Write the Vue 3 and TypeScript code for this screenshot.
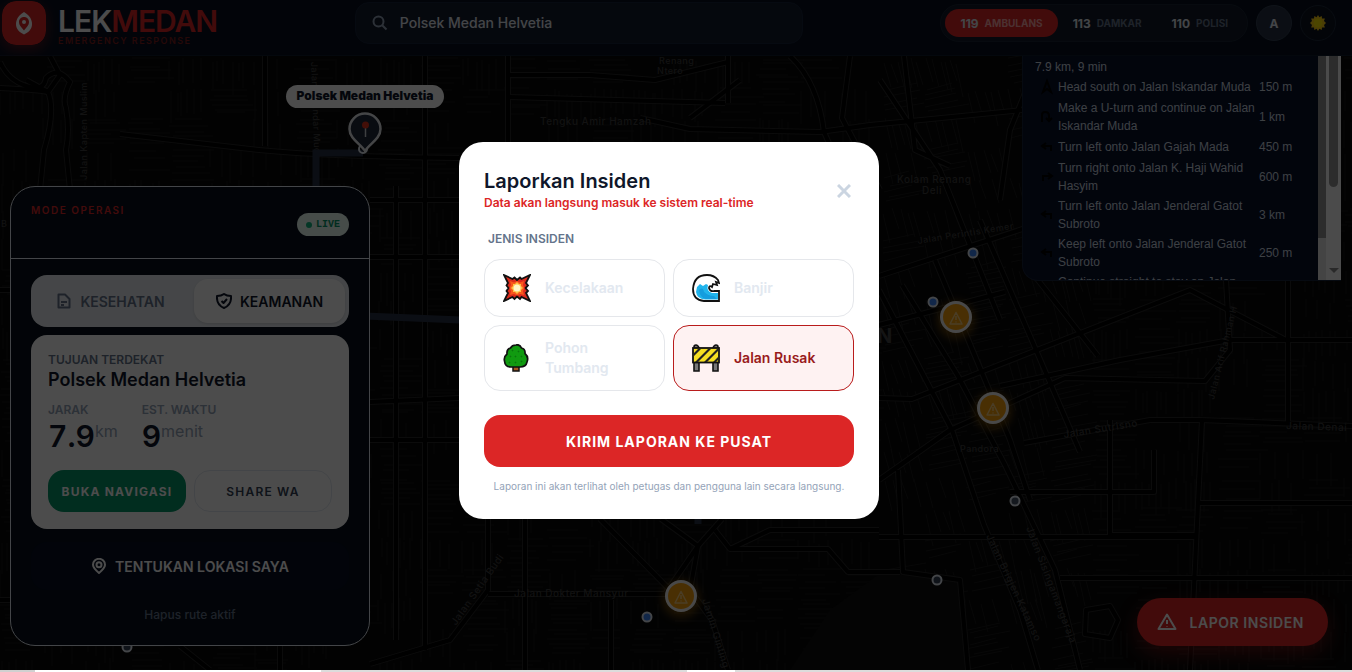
<script setup lang="ts">
import { ref } from 'vue'

interface Step { turn: string; text: string; distance: string }
interface Dot { x: number; y: number; color: string }
interface StreetName { x: number; y: number; angle: number; size: number; text: string }

const query = ref('Polsek Medan Helvetia')
const incident = ref('jalan')

const steps: Step[] = [
  { turn: 'M8 2 L12 13 L8 10 L4 13 Z', text: 'Head south on Jalan Iskandar Muda', distance: '150 m' },
  { turn: 'M3 13 V6 Q3 3 6 3 Q10 3 10 7 V11 M7 9 L10 12 L13 9', text: 'Make a U-turn and continue on Jalan Iskandar Muda', distance: '1 km' },
  { turn: 'M12 12 V7 H4 M7 4 L3 7 L7 10', text: 'Turn left onto Jalan Gajah Mada', distance: '450 m' },
  { turn: 'M4 12 V7 H12 M9 4 L13 7 L9 10', text: 'Turn right onto Jalan K. Haji Wahid Hasyim', distance: '600 m' },
  { turn: 'M12 12 V7 H4 M7 4 L3 7 L7 10', text: 'Turn left onto Jalan Jenderal Gatot Subroto', distance: '3 km' },
  { turn: 'M12 12 V7 H4 M7 4 L3 7 L7 10', text: 'Keep left onto Jalan Jenderal Gatot Subroto', distance: '250 m' },
  { turn: 'M8 13 V3 M5 6 L8 2 L11 6', text: 'Continue straight to stay on Jalan Jenderal Gatot Subroto', distance: '2 km' },
]

const dots: Dot[] = [
  { x: 973, y: 253, color: '#3b82f6' },
  { x: 933, y: 302, color: '#3b82f6' },
  { x: 647, y: 617, color: '#3b82f6' },
  { x: 1015, y: 501, color: '#475569' },
  { x: 937, y: 580, color: '#334155' },
  { x: 127, y: 647, color: '#334155' },
]

const hazards = [
  { x: 956, y: 317 },
  { x: 993, y: 408 },
  { x: 681, y: 596 },
]

const names: StreetName[] = [
  { x: 540, y: 125, angle: 0, size: 10, text: 'Tengku Amir Hamzah' },
  { x: 514, y: 597, angle: 0, size: 10, text: 'Jalan Dokter Mansyur' },
  { x: 659, y: 64, angle: 0, size: 9, text: 'Renang' },
  { x: 657, y: 74, angle: 0, size: 9, text: 'Ntero' },
  { x: 897, y: 183, angle: 0, size: 10, text: 'Kolam Renang' },
  { x: 922, y: 194, angle: 0, size: 10, text: 'Deli' },
  { x: 918, y: 244, angle: -9, size: 9, text: 'Jalan Perintis Kemer' },
  { x: 1064, y: 438, angle: -9, size: 10, text: 'Jalan Sutrisno' },
  { x: 1286, y: 429, angle: 2, size: 10, text: 'Jalan Denai' },
  { x: 960, y: 452, angle: 0, size: 9, text: 'Pandora' },
  { x: 986, y: 536, angle: 65, size: 10, text: 'Jalan Brigjen Katamso' },
  { x: 1026, y: 528, angle: 69, size: 10, text: 'Jalan Sisingamangaraja' },
  { x: 1214, y: 400, angle: -76, size: 9, text: 'Jalan Arif Rahman H' },
  { x: 87, y: 180, angle: -90, size: 9, text: 'Jalan Kapten Muslim' },
  { x: 311, y: 62, angle: 88, size: 9, text: 'Jalan Iskandar Muda' },
  { x: 456, y: 626, angle: -55, size: 10, text: 'Jalan Setia Budi' },
  { x: 702, y: 600, angle: 73, size: 10, text: 'Jamin Ginting' },
]

const roads: string[] = [
  'M0 62 Q8 80 26 86 T46 78 Q58 66 70 82 Q62 98 66 108 Q70 130 66 150 L70 190',
  'M0 88 Q40 90 48 92 Q56 110 44 150 L40 190',
  'M50 56 L60 75 L48 92 L26 80',
  'M120 134 Q190 142 250 149 T459 158',
  'M265 56 V146 M508 56 V142 M728 56 V103',
  'M508 75 H590 L655 80 L728 62 M508 97 L725 103',
  'M640 118 L690 129 L820 132 L870 125 L1022 110',
  'M790 56 Q818 82 824 132 L850 190 M850 56 L842 118 L880 190',
  'M880 80 L940 170 L1000 320 M904 56 L915 150 L950 166',
  'M879 276 L1050 220 M879 325 L1005 292 M879 398 L912 399 L1190 290 L1286 340 H1352',
  'M879 290 L952 430 L984 525 L1020 610 L1038 670',
  'M902 285 L958 376 L1005 465 L1055 570 L1080 670',
  'M935 260 L1010 440 L1030 500',
  'M1030 270 L1098 356 M980 220 L1080 452',
  'M879 480 L950 430 L1065 378 L1205 381 L1230 350 L1226 280',
  'M1024 443 L1150 420 H1200 L1352 426',
  'M1000 386 L1120 360 L1230 340 H1290',
  'M1288 280 V425 M1202 420 L1190 670 M1110 420 V535 H1195',
  'M1010 492 H1154 V450 M980 537 H1195 M1060 578 H1352 M1199 503 H1352',
  'M879 537 H980 M898 470 L903 572 L960 580 L968 670',
  'M370 200 H459 M370 257 H459 M370 440 H459 M370 402 L459 398',
  'M396 186 V640 M425 56 V650',
  'M488 519 V590 L450 640 L370 664',
  'M488 594 H665 L698 546 L722 519',
  'M661 519 L698 546 L690 590 L712 620 L728 670',
  'M715 530 L730 549 H828 L848 572 H900',
  'M600 519 L670 590 M525 519 V670 M611 600 V670',
  'M730 549 L770 530 H879',
  'M0 290 H10 M0 600 H10 M180 646 L210 670 M280 646 V670',
  'M1086 610 L1110 606 L1118 620 L1110 638 L1085 634 Z',
  'M1040 56 L1010 130 L1000 200 M740 80 L690 118',
]

// Repeatable generator for the small residential blocks between the main roads.
let seed = 73
function next(): number {
  seed = (seed * 16807) % 2147483647
  return seed / 2147483647
}

function buildBlocks(): string {
  let d = ''
  for (let y = 58; y < 670; y += 30) {
    for (let x = 0; x < 1352; x += 42) {
      if (next() < 0.12) continue
      const slant = x > 850 && x < 1080 ? 7 : 0
      const vertical = next() > 0.42
      const count = 3 + Math.floor(next() * 4)
      for (let i = 0; i < count; i++) {
        const shift = Math.round((i * 38) / count + next() * 4)
        if (vertical) {
          d += `M${x + shift} ${y + Math.round(next() * 6)}l${slant} ${18 + Math.round(next() * 16)}`
        } else {
          d += `M${x + Math.round(next() * 8)} ${y + Math.round(shift * 0.75)}l${24 + Math.round(next() * 18)} ${-slant}`
        }
      }
    }
  }
  return d
}
const blocks = buildBlocks()
</script>

<template>
  <div class="page">
    <header class="topbar">
      <div class="brand">
        <svg class="logo" viewBox="0 0 44 44" aria-hidden="true">
          <rect width="44" height="44" rx="14" fill="#dc2626" />
          <path d="M22 11 C27 14 30 18 30 23 C30 28 27 31 22 33.500 C17 31 14 28 14 23 C14 18 17 14 22 11 Z" fill="#fff" />
          <path d="M22 16 C25 16 27 18.200 27 21 C27 24.500 24 26.500 22 29.500 C20 26.500 17 24.500 17 21 C17 18.200 19 16 22 16 Z" fill="#dc2626" />
          <circle cx="22" cy="21" r="2" fill="#fff" />
        </svg>
        <div class="brand-text">
          <div class="brand-name">LEK<span>MEDAN</span></div>
          <div class="brand-sub">EMERGENCY RESPONSE</div>
        </div>
      </div>

      <label class="search">
        <svg viewBox="0 0 16 16" aria-hidden="true"><circle cx="6.500" cy="6.500" r="5" /><path d="M10.200 10.200 L14.500 14.500" /></svg>
        <input v-model="query" type="text" aria-label="Cari lokasi">
      </label>

      <div class="actions">
        <nav class="calls">
          <a href="tel:119" class="active"><b>119</b>AMBULANS</a>
          <a href="tel:113"><b>113</b>DAMKAR</a>
          <a href="tel:110"><b>110</b>POLISI</a>
        </nav>
        <button class="round avatar" type="button">A</button>
        <button class="round" type="button" aria-label="Tema">
          <svg viewBox="0 0 16 16" aria-hidden="true">
            <path d="M8 0 L9.400 2.300 L11.700 0.900 L12 3.500 L14.900 3.600 L14 6.100 L16 8 L14 9.900 L14.900 12.400 L12 12.500 L11.700 15.100 L9.400 13.700 L8 16 L6.600 13.700 L4.300 15.100 L4 12.500 L1.100 12.400 L2 9.900 L0 8 L2 6.100 L1.100 3.600 L4 3.500 L4.300 0.900 L6.600 2.300 Z" fill="#facc15" />
            <circle cx="8" cy="8" r="4.500" fill="#ffe600" />
          </svg>
        </button>
      </div>
    </header>

    <main class="stage">
      <svg class="map" viewBox="0 56 1352 614" preserveAspectRatio="xMidYMid slice" role="img" aria-label="Peta Medan">
        <rect y="56" width="1352" height="614" fill="#070707" />
        <path :d="blocks" class="lanes" />
        <path d="M879 574 L955 575 L966 600 V670 H790 L830 610 Z" fill="#0e0e0e" />
        <path v-for="(road, i) in roads" :key="'c' + i" :d="road" class="road-edge" />
        <path v-for="(road, i) in roads" :key="'r' + i" :d="road" class="road" />
        <text
          v-for="name in names" :key="name.text + name.y" class="street" :x="name.x" :y="name.y" :font-size="name.size"
          :transform="`rotate(${name.angle} ${name.x} ${name.y})`"
        >{{ name.text }}</text>
        <text class="city" x="877" y="343">N</text>
        <text class="street" x="1" y="227" font-size="9">B</text>

        <path class="route" d="M363 153 H316 V314 L460 320 L698 470 V524" />

        <g v-for="dot in dots" :key="dot.x">
          <circle :cx="dot.x" :cy="dot.y" r="4.500" :fill="dot.color" stroke="#e2e8f0" stroke-width="2" />
        </g>
        <g v-for="spot in hazards" :key="spot.x" :transform="`translate(${spot.x} ${spot.y})`">
          <circle class="halo" r="19" cy="3" />
          <circle r="14.500" fill="#f59e0b" stroke="#f1f1f1" stroke-width="3" />
          <path d="M0 -4.500 L6 7 H-6 Z M0 -1 V3 M0 4.500 V5.500" class="spot-icon" />
        </g>

        <circle cx="363" cy="149" r="4" fill="none" stroke="#e2e8f0" stroke-width="2" />
        <path d="M365 151 C361 144 349.500 139 349.500 129 A15.500 15.500 0 0 1 380.500 129 C380.500 139 369 144 365 151 Z" fill="#1e293b" stroke="#e5e7eb" stroke-width="2.500" />
        <path d="M365.500 127 V137" stroke="#d1d5db" stroke-width="1.500" />
        <circle cx="365.500" cy="125" r="3.500" fill="#e0351b" />
        <rect x="286" y="85" width="158" height="23" rx="11.500" fill="#fff" />
        <text class="pin-label" x="365" y="100">Polsek Medan Helvetia</text>
      </svg>

      <section class="panel">
        <div class="panel-head">
          <span class="eyebrow">MODE OPERASI</span>
          <span class="live"><i></i>LIVE</span>
        </div>
        <div class="panel-body">
          <div class="tabs">
            <button type="button">
              <svg viewBox="0 0 16 16" aria-hidden="true"><path d="M2.500 1.500 H9 L13.500 6 V14.500 H2.500 Z M5 9 H11 M5 12 H8" /></svg>KESEHATAN
            </button>
            <button type="button" class="on">
              <svg viewBox="0 0 16 16" aria-hidden="true"><path d="M8 1 C10 2.500 12 3 15 3 C15.500 9 13 13 8 15 C3 13 0.500 9 1 3 C4 3 6 2.500 8 1 Z M5.500 8 L7.500 10 L11 6" /></svg>KEAMANAN
            </button>
          </div>
          <article class="target">
            <p class="cap strong">TUJUAN TERDEKAT</p>
            <h2>Polsek Medan Helvetia</h2>
            <div class="stats">
              <div><p class="cap">JARAK</p><p class="value">7.9<span>km</span></p></div>
              <div><p class="cap">EST. WAKTU</p><p class="value">9<span>menit</span></p></div>
            </div>
            <div class="pair">
              <button type="button" class="go">BUKA NAVIGASI</button>
              <button type="button" class="share">SHARE WA</button>
            </div>
          </article>
          <button type="button" class="locate">
            <svg viewBox="0 0 16 16" aria-hidden="true"><path d="M8 15 C5 12.500 2 10 2 6.800 A6 6 0 0 1 14 6.800 C14 10 11 12.500 8 15 Z" /><circle cx="8" cy="6.800" r="2.500" /></svg>TENTUKAN LOKASI SAYA
          </button>
          <button type="button" class="clear">Hapus rute aktif</button>
        </div>
      </section>

      <aside class="route-panel">
        <div class="route-list">
          <p>7.9 km, 9 min</p>
          <table>
            <tbody>
              <tr v-for="step in steps" :key="step.text">
                <td class="turn"><svg viewBox="0 0 16 16" aria-hidden="true"><path :d="step.turn" /></svg></td>
                <td class="instr">{{ step.text }}</td>
                <td>{{ step.distance }}</td>
              </tr>
            </tbody>
          </table>
        </div>
        <div class="inner-bar"><i></i></div>
        <div class="outer-bar"><i></i><b></b></div>
      </aside>

      <button type="button" class="fab">
        <svg viewBox="0 0 20 20" aria-hidden="true"><path d="M10 2.500 L18.500 17 H1.500 Z M10 8 V12 M10 14 V14.500" /></svg>LAPOR INSIDEN
      </button>
    </main>

    <div class="shade">
      <form class="modal" role="dialog" aria-labelledby="report-title" @submit.prevent>
        <div class="modal-head">
          <div>
            <h1 id="report-title">Laporkan Insiden</h1>
            <p>Data akan langsung masuk ke sistem real-time</p>
          </div>
          <button type="button" class="close" aria-label="Tutup">
            <svg viewBox="0 0 14 14" aria-hidden="true"><path d="M1 1 L13 13 M13 1 L1 13" /></svg>
          </button>
        </div>
        <fieldset>
          <legend>JENIS INSIDEN</legend>
          <div class="types">
            <label class="type" :class="{ on: incident === 'kecelakaan' }">
              <input v-model="incident" type="radio" name="incident" value="kecelakaan">
              <svg viewBox="0 0 28 28" aria-hidden="true">
                <path d="M1 1 L9.500 5 L11.500 3.500 L14 6 L17 3.500 L18.500 5 L27 1 L23 9 L25 11.500 L22.500 14 L25 17 L23 19 L27 27 L18.500 23 L17 25 L14 22.500 L11.500 25 L9.500 23 L1 27 L5 19 L3.500 17 L5.500 14 L3.500 11.500 L5 9 Z" fill="#dc2a1c" stroke="#111" stroke-width="1.800" />
                <path d="M7 7 L11 8.500 L14 7 L17 8.500 L21 7 L20 11 L21.500 14 L20 17 L21 21 L17 20 L14 21.500 L11 20 L7 21 L8 17 L6.500 14 L8 11 Z" fill="#f9591c" />
                <path d="M10 10 L12 10 L14 8 L16 10 L18 10 L18 12 L20 14 L18 16 L18 18 L16 18 L14 20 L12 18 L10 18 L10 16 L8 14 L10 12 Z" fill="#ffc247" />
                <circle cx="14" cy="14" r="3.500" fill="#fff5c8" />
              </svg>
              <span>Kecelakaan</span>
            </label>
            <label class="type" :class="{ on: incident === 'banjir' }">
              <input v-model="incident" type="radio" name="incident" value="banjir">
              <svg viewBox="0 0 28 28" aria-hidden="true">
                <path d="M27 27 H12 Q1 26 1 15 Q2 1 15 1 Q22 1 26 6 L27 9 L24 8 L25 11 L21 10 L20 13 Q17 11 17 14 Q18 18 22 17 H27 Z" fill="#fff" stroke="#111" stroke-width="1.800" />
                <path d="M5 13 L8 10 L11 12 L14 10 L16 11 Q14 17 20 19 H26 V25.500 H13 Q5 25 4 18 Z" fill="#20b4ec" />
                <path d="M7 16 Q11 12 12 18 Q16 22 22 22 L25 25 H14 Q8 24 7 16 Z" fill="#0a86cf" opacity="0.500" />
              </svg>
              <span>Banjir</span>
            </label>
            <label class="type" :class="{ on: incident === 'pohon' }">
              <input v-model="incident" type="radio" name="incident" value="pohon">
              <svg viewBox="0 0 28 28" aria-hidden="true">
                <path d="M10 22 H16 V27 H10 Z" fill="#a5551d" stroke="#111" stroke-width="1.500" />
                <path d="M13 1 Q17 0 18.500 4 Q22.500 5 22 9.500 Q26 13 24 18 Q23 23 17 23 H8 Q2 23 1.500 17 Q0.500 13 4 10 Q3.500 5 7.500 4 Q9 1 13 1 Z" fill="#109a10" stroke="#111" stroke-width="1.700" />
                <path d="M9 6 l1 1 M15 7 l1 1 M7 12 l1 1 M12 12 l1 1 M18 12 l1 1 M6 18 l1 1 M12 18 l1 1 M18 17 l1 1" stroke="#0a720d" stroke-width="1.500" />
              </svg>
              <span>Pohon Tumbang</span>
            </label>
            <label class="type" :class="{ on: incident === 'jalan' }">
              <input v-model="incident" type="radio" name="incident" value="jalan">
              <svg viewBox="0 0 28 28" aria-hidden="true">
                <path d="M2 3 Q2 1 4 1 Q6 1 7 4 V27 H2 Z M21 4 Q22 1 24 1 Q26 1 26 3 V27 H21 Z" fill="#777" stroke="#111" stroke-width="1.600" />
                <rect x="1" y="4" width="26" height="14.500" fill="#f5df22" stroke="#111" stroke-width="1.800" />
                <path d="M2 9 L6 5 H9 L2 12 Z M3 18 L16 5 H19 L6 18 Z M12 18 L25 5 H26 V7 L15 18 Z M21 18 L26 13 V16 L24 18 Z" fill="#222" />
              </svg>
              <span>Jalan Rusak</span>
            </label>
          </div>
        </fieldset>
        <button type="submit" class="send">KIRIM LAPORAN KE PUSAT</button>
        <p class="note">Laporan ini akan terlihat oleh petugas dan pengguna lain secara langsung.</p>
      </form>
    </div>
    <div class="edge"></div>
  </div>
</template>

<style>
body { margin: 0; background: #000; overflow: hidden; }
</style>

<style scoped>
.page {
  position: relative;
  display: flex;
  flex-direction: column;
  height: 100vh;
  min-height: 600px;
  font-family: Inter, "Liberation Sans", sans-serif;
}
.page * { box-sizing: border-box; }
.page p, .page h1, .page h2 { margin: 0; }
button { font-family: inherit; border: 0; padding: 0; background: none; cursor: pointer; }

.topbar {
  display: flex;
  justify-content: space-between;
  align-items: flex-start;
  height: 56px;
  padding: 1px 16px 0 2px;
  background: #07101f;
  border-bottom: 1px solid #101b2e;
}
.brand { display: flex; gap: 12px; }
.logo { width: 44px; height: 44px; border-radius: 14px; box-shadow: 0 4px 14px rgba(220, 38, 38, 0.4); }
.brand-text { padding-top: 5px; }
.brand-name { font-size: 30px; line-height: 30px; font-weight: 600; color: #fff; letter-spacing: -1px; }
.brand-name span { color: #dc2626; }
.brand-sub { font-size: 9px; line-height: 9px; font-weight: 600; letter-spacing: 0.16em; color: #7f1d1d; }

.search {
  display: flex;
  align-items: center;
  gap: 12px;
  width: 448px;
  height: 42px;
  margin-top: 1px;
  padding: 0 16px;
  border: 1px solid #17233a;
  border-radius: 14px;
  background: #121b2e;
}
.search svg { width: 16px; height: 16px; fill: none; stroke: #94a3b8; stroke-width: 2; }
.search input { flex: 1; min-width: 0; padding: 0; border: 0; outline: 0; background: none; color: #e2e8f0; font: 500 14px/20px Inter, sans-serif; }

.actions { display: flex; align-items: center; gap: 8px; padding-top: 3px; }
.calls { display: flex; padding: 4px; border: 1px solid #1a2435; border-radius: 19px; background: #111928; }
.calls a {
  display: flex;
  align-items: center;
  gap: 6px;
  height: 28px;
  padding: 0 15px;
  border-radius: 14px;
  color: #64748b;
  font-size: 10px;
  font-weight: 700;
  text-decoration: none;
}
.calls b { color: #e2e8f0; font-size: 12px; font-weight: 700; }
.calls .active { background: #dc2626; color: #fca5a5; }
.round { display: grid; place-items: center; width: 36px; height: 36px; border: 1px solid #1e293b; border-radius: 50%; background: #0a1220; color: #e2e8f0; font-size: 12px; font-weight: 700; }
.round svg { width: 16px; height: 16px; }
.avatar { background: #273043; border-color: #334155; }

.stage { position: relative; flex: 1; min-height: 0; overflow: hidden; background: #070707; }
.map { display: block; width: 100%; height: 100%; }
.lanes { fill: none; stroke: #191919; stroke-width: 1; }
.road-edge { fill: none; stroke: #252525; stroke-width: 6; stroke-linejoin: round; }
.road { fill: none; stroke: #000; stroke-width: 4; stroke-linejoin: round; }
.street { fill: #3c3c3c; font-family: Inter, sans-serif; font-weight: 500; letter-spacing: 0.05em; }
.city { fill: #444; font: 700 20px Inter, sans-serif; }
.route { fill: none; stroke: #273044; stroke-width: 7; }
.halo { fill: #f59e0b; opacity: 0.35; filter: blur(4px); }
.spot-icon { fill: none; stroke: #fbe3b0; stroke-opacity: 0.7; stroke-width: 1.5; stroke-linejoin: round; }
.pin-label { fill: #0f172a; font: 900 12px Inter, sans-serif; text-anchor: middle; }

.panel {
  position: absolute;
  left: 10px;
  bottom: 24px;
  width: 360px;
  border: 1px solid #e2e8f0;
  border-radius: 25px;
  overflow: hidden;
  background: #07101c;
}
.panel-head { display: flex; justify-content: space-between; align-items: flex-start; height: 72px; padding: 15px 20px; border-bottom: 1px solid #e2e8f0; }
.eyebrow { color: #dc2626; font-size: 10px; line-height: 16px; font-weight: 600; letter-spacing: 0.15em; }
.live { display: flex; align-items: center; gap: 4px; height: 23px; margin-top: 11px; padding: 0 9px; border-radius: 12px; background: #ecfdf5; color: #059669; font: 700 10px "Liberation Mono", monospace; }
.live i { width: 6px; height: 6px; border-radius: 50%; background: #10b981; }
.panel-body { display: flex; flex-direction: column; padding: 16px 20px 16px; }
.tabs { display: grid; grid-template-columns: 1fr 1fr; gap: 8px; padding: 4px; border-radius: 16px; background: #e8ecf1; }
.tabs button { display: flex; align-items: center; justify-content: center; gap: 8px; height: 44px; border-radius: 14px; color: #64748b; font-size: 14px; font-weight: 600; }
.tabs svg, .locate svg { width: 16px; height: 16px; fill: none; stroke: currentColor; stroke-width: 2; stroke-linejoin: round; }
.tabs .on { background: #fff; color: #0f172a; box-shadow: 0 1px 3px rgba(0, 0, 0, 0.12); }
.target { margin-top: 8px; padding: 17px; border-radius: 16px; background: #fff; }
.cap { color: #94a3b8; font-size: 12px; line-height: 16px; font-weight: 600; }
.cap.strong { color: #64748b; }
.target h2 { color: #0f172a; font-size: 18px; line-height: 24px; font-weight: 600; }
.stats { display: flex; gap: 24px; margin-top: 10px; }
.value { display: flex; color: #0f172a; font-size: 30px; line-height: 36px; font-weight: 600; font-variant-numeric: tabular-nums; }
.value span { color: #94a3b8; font-size: 16px; line-height: 26px; font-weight: 400; }
.pair { display: grid; grid-template-columns: 1fr 1fr; gap: 8px; margin-top: 16px; }
.pair button { height: 42px; border-radius: 16px; font-size: 12px; letter-spacing: 0.1em; white-space: nowrap; }
.pair .go { background: #059669; color: #fff; font-weight: 700; }
.pair .share { border: 1px solid #e2e8f0; color: #334155; font-weight: 600; }
.locate { display: flex; align-items: center; justify-content: center; gap: 8px; height: 48px; margin-top: 13px; border-radius: 16px; background: #071024; color: #fff; font-size: 14px; font-weight: 600; }
.clear { height: 30px; margin-top: 9px; color: #64748b; font-size: 12px; font-weight: 500; }

.route-panel {
  position: absolute;
  top: 0;
  right: 11px;
  display: flex;
  width: 319px;
  height: 225px;
  border: 1px solid #17233a;
  border-top: 0;
  border-right: 0;
  border-bottom-left-radius: 16px;
  overflow: hidden;
  background: #07112a;
  color: #cbd5e1;
  font: 12px/18px "Liberation Sans", Arial, sans-serif;
}
.route-list { flex: 1; padding: 2px 0 0 12px; overflow: hidden; }
.route-list table { width: 270px; border-collapse: collapse; }
.route-list td { padding: 1px 0; }
.turn { width: 23px; }
.turn svg { display: block; width: 16px; height: 20px; margin-left: 4px; fill: none; stroke: #000; stroke-width: 2; }
.instr { width: 201px; }
.inner-bar { width: 8px; background: #e5e5e5; }
.inner-bar i { display: block; height: 182px; background: #949494; }
.outer-bar { display: flex; flex-direction: column; justify-content: space-between; align-items: center; width: 15px; background: #fafafa; }
.outer-bar i { width: 9px; height: 131px; border-radius: 0 0 5px 5px; background: #949494; }
.outer-bar b { border: 5px solid transparent; border-top-color: #8a8a8a; border-bottom: 0; margin-bottom: 7px; }

.fab {
  position: absolute;
  right: 24px;
  bottom: 24px;
  display: flex;
  align-items: center;
  gap: 12px;
  height: 48px;
  padding: 0 24px 0 20px;
  border-radius: 24px;
  background: #dc2626;
  box-shadow: 0 8px 20px rgba(220, 38, 38, 0.4);
  color: #fff;
  font-size: 14px;
  font-weight: 600;
  letter-spacing: 0.04em;
}
.fab svg { width: 20px; height: 20px; fill: none; stroke: currentColor; stroke-width: 2; stroke-linejoin: round; }

.shade {
  position: absolute;
  inset: 0 0 2px;
  display: grid;
  place-items: center;
  padding: 0 14px 9px 0;
  background: rgba(0, 0, 0, 0.7);
}
.modal { width: 420px; padding: 25px; border-radius: 24px; background: #fff; }
.modal-head { display: flex; justify-content: space-between; align-items: center; }
.modal-head h1 { color: #0f172a; font-size: 20px; line-height: 28px; font-weight: 600; }
.modal-head p { color: #dc2626; font-size: 12px; line-height: 16px; font-weight: 600; }
.close { display: grid; place-items: center; width: 20px; height: 28px; margin-top: 4px; }
.close svg { width: 14px; height: 14px; fill: none; stroke: #cbd5e1; stroke-width: 3; }
fieldset { margin: 20px 0 0; padding: 0; border: 0; min-width: 0; }
legend { padding: 0 4px 12px; color: #64748b; font-size: 12px; line-height: 16px; font-weight: 600; }
.types { display: grid; grid-template-columns: 1fr 1fr; gap: 8px; }
.type { position: relative; display: flex; align-items: center; gap: 14px; min-height: 58px; padding: 12px 18px; border: 1px solid #e5e7eb; border-radius: 16px; color: #e2e8f0; font-size: 14px; line-height: 20px; font-weight: 600; cursor: pointer; }
.type input { position: absolute; inset: 0; margin: 0; opacity: 0; }
.type svg { flex: none; width: 28px; height: 28px; }
.type.on { border-color: #b91c1c; background: #fef2f2; color: #991b1b; }
.send { width: 100%; height: 52px; margin-top: 24px; border-radius: 16px; background: #dc2626; color: #fff; font-size: 14px; font-weight: 700; letter-spacing: 1px; }
.modal .note { margin-top: 12px; color: #94a3b8; font-size: 10px; line-height: 15px; text-align: center; }
.edge { flex: none; height: 2px; background: linear-gradient(90deg, #d0d0d0 0 35px, #fff 35px 321px, #dcdcdc 321px 687px, #fff 687px 735px, #dcdcdc 735px); }
</style>
